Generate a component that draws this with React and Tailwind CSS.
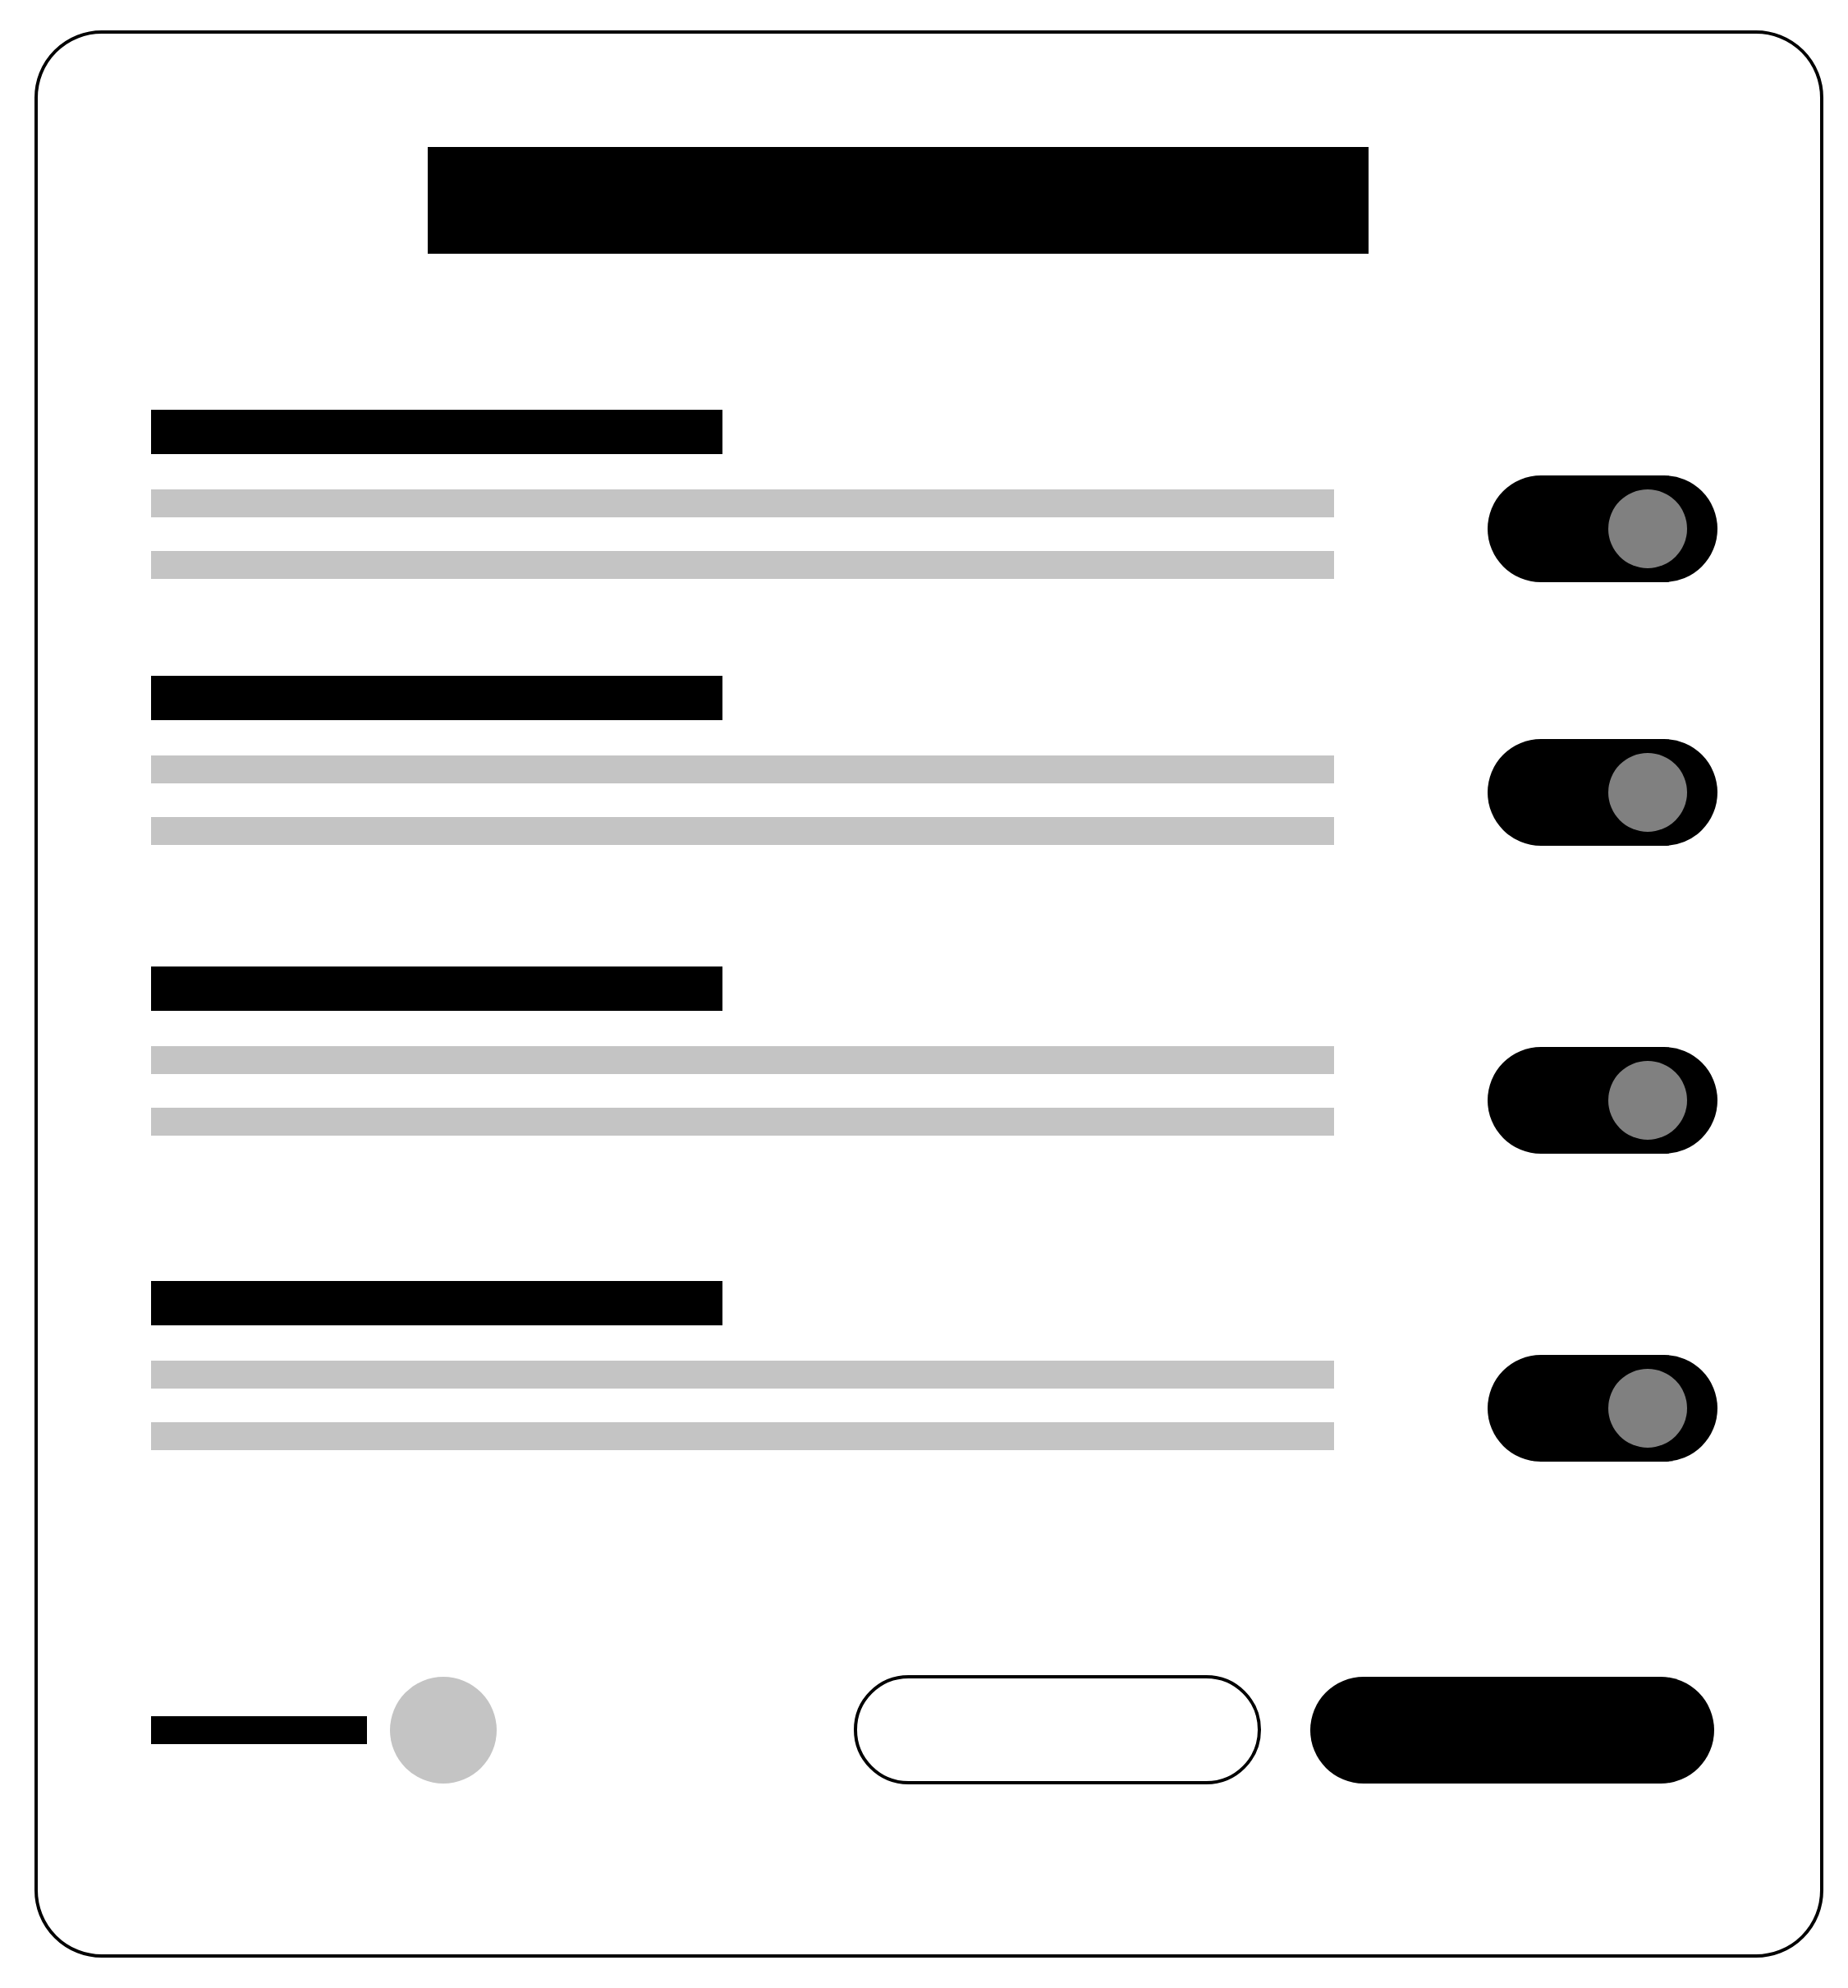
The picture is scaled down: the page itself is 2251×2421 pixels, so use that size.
const settings = [
  { id: "setting-1", label: "Setting 1", row: "mb-[114px]", toggle: "mt-[80px]" },
  { id: "setting-2", label: "Setting 2", row: "mb-[147px]", toggle: "mt-[77px]" },
  { id: "setting-3", label: "Setting 3", row: "mb-[155px]", toggle: "mt-[98px]" },
  { id: "setting-4", label: "Setting 4", row: "", toggle: "mt-[90px]" },
];

function Toggle({ id, label, className }) {
  return (
    <input
      id={id}
      type="checkbox"
      role="switch"
      aria-label={label}
      defaultChecked
      className={`flex h-[130px] w-[280px] shrink-0 cursor-pointer appearance-none items-center rounded-full bg-black px-[37px] before:block before:size-24 before:rounded-full before:bg-[#808080] before:content-[''] checked:justify-end ${className}`}
    />
  );
}

function SettingRow({ id, label, row, toggle }) {
  return (
    <li className={`flex items-start justify-between gap-[187px] ${row}`}>
      <label htmlFor={id} className="block min-w-0 flex-1">
        <span className="block h-[54px] w-[696px] max-w-full bg-black" />
        <span className="mt-[43px] block h-[34px] bg-[#c4c4c4]" />
        <span className="mt-[41px] block h-[34px] bg-[#c4c4c4]" />
      </label>
      <Toggle id={id} label={label} className={toggle} />
    </li>
  );
}

export default function App() {
  return (
    <div className="bg-white pt-[37px] pr-[30px] pb-[37px] pl-[42px]">
      <main className="rounded-[82px] border-4 border-black bg-white pt-[138px] pr-[125px] pb-[207px] pl-[138px]">
        <header className="pl-[337px]">
          <h1 aria-label="Settings" className="h-[130px] w-[1146px] max-w-full bg-black" />
        </header>

        <ul className="mt-[190px]">
          {settings.map((s) => (
            <SettingRow key={s.id} {...s} />
          ))}
        </ul>

        <footer className="mt-[260px] flex items-center justify-between pr-1">
          <div className="flex items-center gap-7">
            <span className="block h-[34px] w-[263px] bg-black" />
            <button type="button" aria-label="More" className="size-[130px] rounded-full bg-[#c4c4c4]" />
          </div>
          <div className="flex items-center gap-[60px]">
            <button
              type="button"
              aria-label="Cancel"
              className="h-[133px] w-[496px] rounded-full border-4 border-black bg-white"
            />
            <button type="button" aria-label="Save" className="h-[130px] w-[492px] rounded-full bg-black" />
          </div>
        </footer>
      </main>
    </div>
  );
}
